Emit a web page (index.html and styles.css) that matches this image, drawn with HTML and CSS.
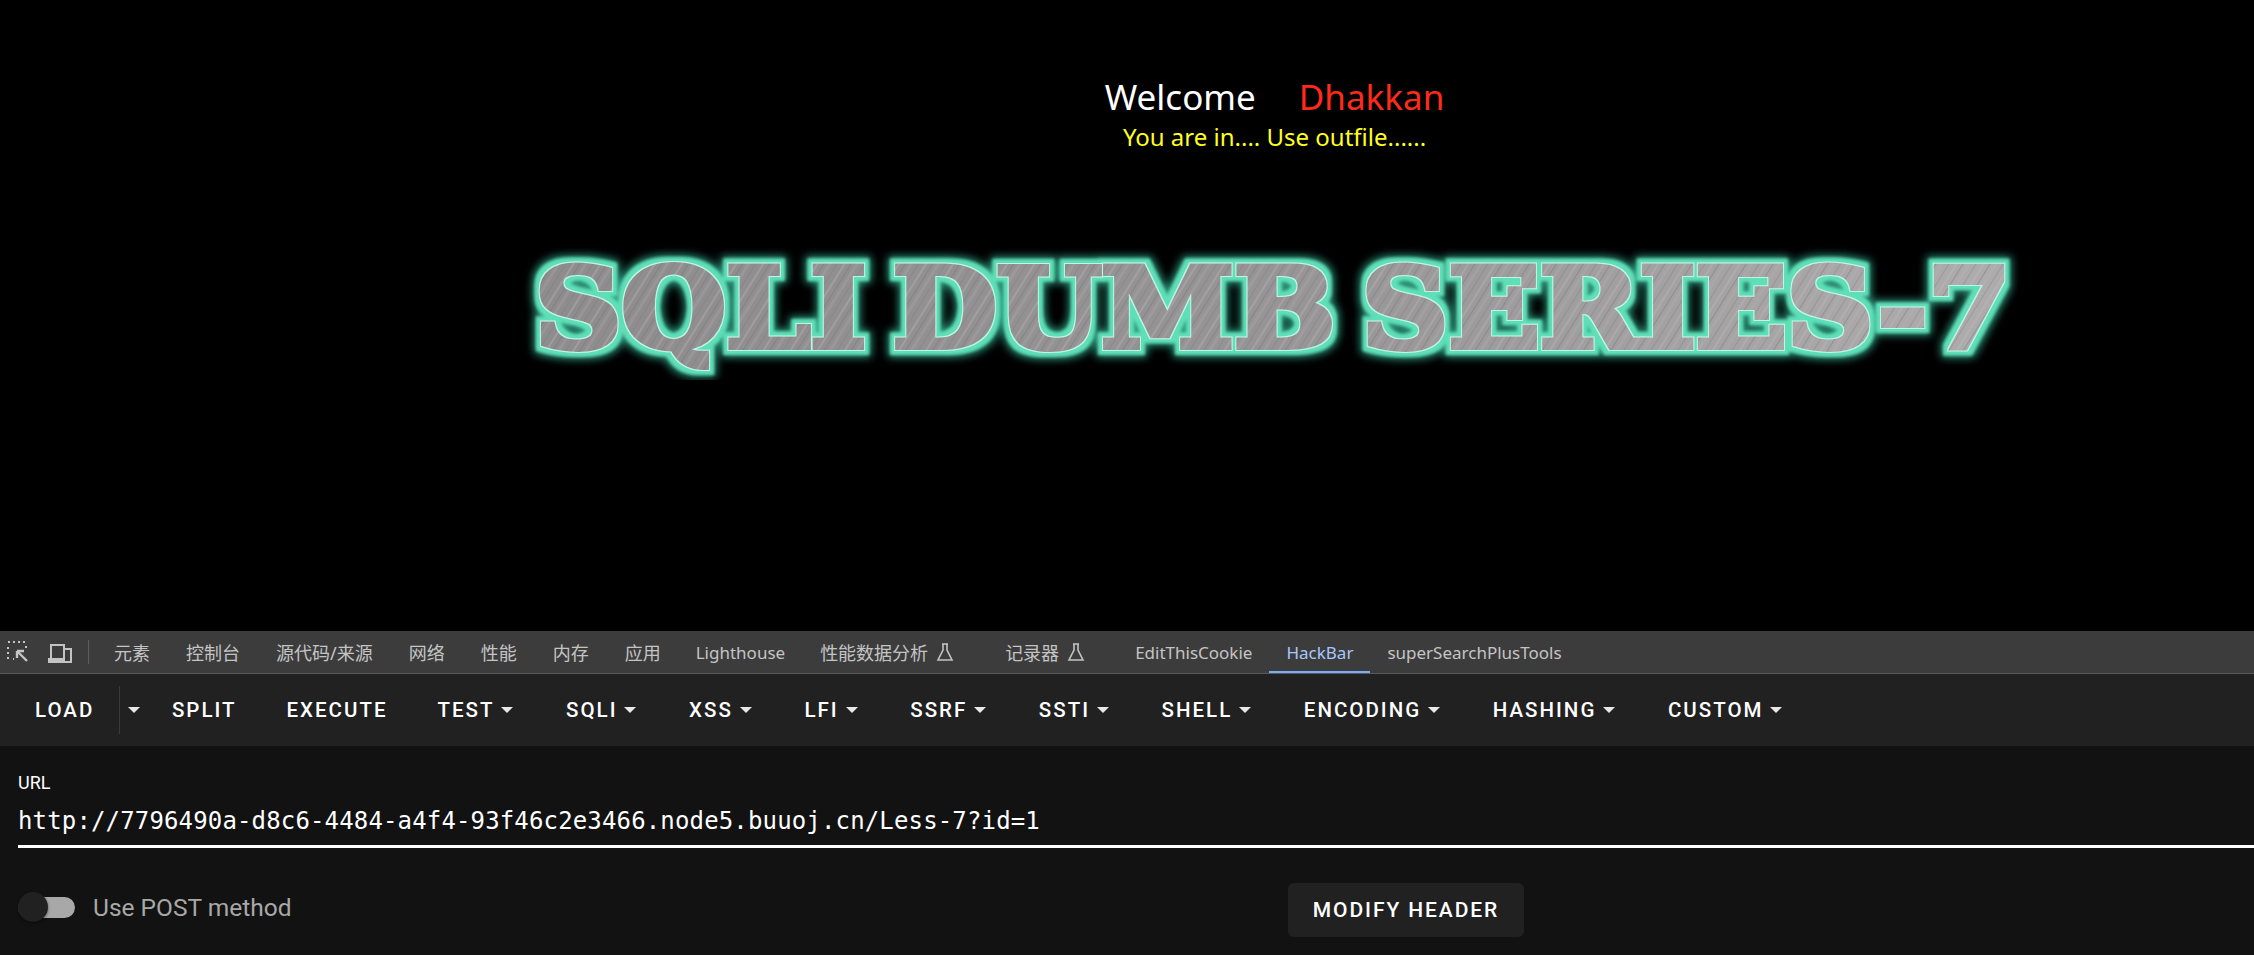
FILE: index.html
```html
<!DOCTYPE html>
<html lang="en">
  <head>
    <meta charset="UTF-8" />
    <title>SQLI DUMB SERIES-7</title>
    <link rel="stylesheet" href="styles.css">
  </head>
  <body>
    <div class="page">
      <div class="welcome"><span class="hello">Welcome</span><span class="name">Dhakkan</span></div>
      <div class="status">You are in.... Use outfile......</div>
      <svg class="banner" viewBox="0 0 1760 140" role="img">
        <defs>
          <linearGradient id="sheen" x1="0" y1="0" x2="1" y2="0">
            <stop offset="0.1" stop-color="#8f8c8e" />
            <stop offset="0.5" stop-color="#979496" />
            <stop offset="0.9" stop-color="#adabab" />
          </linearGradient>
          <pattern id="hatch" width="23" height="30" patternUnits="userSpaceOnUse" patternTransform="rotate(32)">
            <rect x="2" width="2" height="30" fill="#c4c1c1" opacity="0.3" />
            <rect x="8" width="1" height="30" fill="#6f6d70" opacity="0.4" />
            <rect x="12" width="3" height="30" fill="#bdbaba" opacity="0.2" />
            <rect x="19" width="1" height="30" fill="#77757a" opacity="0.35" />
          </pattern>
          <pattern id="brushed" width="1760" height="140" patternUnits="userSpaceOnUse">
            <rect width="1760" height="140" fill="url(#sheen)" />
            <rect width="1760" height="140" fill="url(#hatch)" />
          </pattern>
          <filter id="glow" x="-3%" y="-25%" width="106%" height="150%">
            <feMorphology in="SourceAlpha" operator="dilate" radius="7" result="fat" />
            <feGaussianBlur in="fat" stdDeviation="4" result="fatBlur" />
            <feFlood flood-color="#2f9c80" />
            <feComposite in2="fatBlur" operator="in" result="halo" />
            <feMorphology in="SourceAlpha" operator="dilate" radius="5" result="mid" />
            <feGaussianBlur in="mid" stdDeviation="1.500" result="midBlur" />
            <feFlood flood-color="#5fdfb8" />
            <feComposite in2="midBlur" operator="in" result="band" />
            <feMorphology in="SourceAlpha" operator="dilate" radius="1" result="thin" />
            <feFlood flood-color="#bff5e4" />
            <feComposite in2="thin" operator="in" result="edge" />
            <feMerge>
              <feMergeNode in="halo" />
              <feMergeNode in="band" />
              <feMergeNode in="edge" />
              <feMergeNode in="SourceGraphic" />
            </feMerge>
          </filter>
        </defs>
        <text class="banner-text" x="140" y="107" textLength="1476" lengthAdjust="spacingAndGlyphs" fill="url(#brushed)" stroke="url(#brushed)" filter="url(#glow)">SQLI DUMB SERIES-7</text>
      </svg>
    </div>

    <div class="tabbar">
      <svg class="tool-icon inspect" viewBox="0 0 22 22">
        <path d="M1 1h2M6 1h2M11 1h2M16 1h2M1 6v2M1 11v2M1 16v2M6 18h1M19 5v2" fill="none" stroke="#c4c4c4" stroke-width="2" />
        <path d="M11 11l9 9M10 10h7M10 10v7" fill="none" stroke="#c4c4c4" stroke-width="2.4" />
      </svg>
      <svg class="tool-icon device" viewBox="0 0 24 22">
        <path d="M3 18V4h13v3M0 18h14v3H0z" fill="none" stroke="#c4c4c4" stroke-width="2" />
        <path d="M0 19.500h14" stroke="#c4c4c4" stroke-width="3" />
        <rect x="16" y="8" width="7" height="13" fill="none" stroke="#c4c4c4" stroke-width="2" />
      </svg>
      <span class="tab-sep"></span>
      <span class="tab">元素</span>
      <span class="tab">控制台</span>
      <span class="tab">源代码/来源</span>
      <span class="tab">网络</span>
      <span class="tab">性能</span>
      <span class="tab">内存</span>
      <span class="tab">应用</span>
      <span class="tab latin">Lighthouse</span>
      <span class="tab tab-wide">性能数据分析
        <svg class="flask" viewBox="0 0 18 20"><path d="M6 2h6M7 2v6L2 18h14L11 8V2" fill="none" stroke="#c4c4c4" stroke-width="1.6" /></svg>
      </span>
      <span class="tab tab-wide">记录器
        <svg class="flask" viewBox="0 0 18 20"><path d="M6 2h6M7 2v6L2 18h14L11 8V2" fill="none" stroke="#c4c4c4" stroke-width="1.6" /></svg>
      </span>
      <span class="tab latin">EditThisCookie</span>
      <span class="tab latin active">HackBar</span>
      <span class="tab latin">superSearchPlusTools</span>
    </div>

    <div class="toolbar">
      <button class="tb-btn load">LOAD</button>
      <span class="tb-sep"></span>
      <button class="tb-btn arrow-only"><i class="caret"></i></button>
      <button class="tb-btn">SPLIT</button>
      <button class="tb-btn">EXECUTE</button>
      <button class="tb-btn">TEST<i class="caret"></i></button>
      <button class="tb-btn">SQLI<i class="caret"></i></button>
      <button class="tb-btn">XSS<i class="caret"></i></button>
      <button class="tb-btn">LFI<i class="caret"></i></button>
      <button class="tb-btn">SSRF<i class="caret"></i></button>
      <button class="tb-btn">SSTI<i class="caret"></i></button>
      <button class="tb-btn">SHELL<i class="caret"></i></button>
      <button class="tb-btn">ENCODING<i class="caret"></i></button>
      <button class="tb-btn">HASHING<i class="caret"></i></button>
      <button class="tb-btn">CUSTOM<i class="caret"></i></button>
    </div>

    <div class="panel">
      <label class="url-label">URL</label>
      <div class="url-value">http://7796490a-d8c6-4484-a4f4-93f46c2e3466.node5.buuoj.cn/Less-7?id=1</div>
      <div class="options">
        <div class="switch">
          <span class="track"><span class="knob"></span></span>
          <span class="switch-label">Use POST method</span>
        </div>
        <button class="modify">MODIFY HEADER</button>
      </div>
    </div>
  </body>
</html>
```

FILE: styles.css
```css
* {
  box-sizing: border-box;
}
body {
  margin: 0;
  height: 955px;
  overflow: hidden;
  display: flex;
  flex-direction: column;
  background: #121212;
  font-family: Roboto, Arial, sans-serif;
}
.page {
  height: 631px;
  background: #000;
  padding: 72px 0 0 295px;
  display: flex;
  flex-direction: column;
  align-items: center;
  font-family: "Noto Sans", "Open Sans", sans-serif;
}
.welcome {
  font-size: 35px;
  line-height: 50px;
  display: flex;
  gap: 43px;
}
.hello {
  color: #fff;
}
.name {
  color: #ff2a1a;
}
.status {
  color: #ffff1e;
  font-size: 24px;
  line-height: 30px;
}
.banner {
  width: 1760px;
  height: 140px;
  margin-top: 88px;
  flex: none;
}
.banner-text {
  font-family: "DejaVu Serif", serif;
  font-weight: bold;
  font-size: 110px;
  stroke-width: 6px;
  word-spacing: -14px;
}

.tabbar {
  height: 43px;
  background: #3c3c3c;
  border-bottom: 1px solid #5a5a5a;
  display: flex;
  align-items: stretch;
  padding-left: 7px;
  color: #c4c4c4;
  font-family: "Noto Sans", "Noto Sans CJK SC", sans-serif;
  font-size: 18px;
}
.tool-icon {
  height: 22px;
  margin-top: 10px;
}
.inspect {
  width: 22px;
  margin-right: 19px;
}
.device {
  width: 24px;
  margin-right: 16px;
}
.tab-sep {
  width: 1px;
  height: 24px;
  margin: 9px 7px 0 0;
  background: #5f5f5f;
}
.tab {
  display: flex;
  align-items: center;
  gap: 8px;
  padding: 0 18px;
  white-space: nowrap;
}
.tab.latin {
  font-size: 17px;
  padding: 0 17px;
}
.tab-wide {
  padding-right: 33px;
}
.tab.active {
  color: #a8c7fa;
  box-shadow: inset 0 -2px 0 #7cacf8;
}
.flask {
  width: 18px;
  height: 20px;
}

.toolbar {
  height: 72px;
  background: #212121;
  display: flex;
  align-items: center;
  padding-left: 10px;
}
.tb-btn {
  height: 54px;
  padding: 0 25px;
  border: none;
  background: none;
  color: #fff;
  font-family: Roboto, Arial, sans-serif;
  font-weight: 500;
  font-size: 20.5px;
  letter-spacing: 2px;
  display: flex;
  align-items: center;
  gap: 7px;
  white-space: nowrap;
}
.tb-btn.arrow-only {
  padding: 0 4px 0 8px;
}
.tb-sep {
  width: 1px;
  height: 48px;
  background: #3a3a3a;
}
.caret {
  width: 0;
  height: 0;
  margin-right: 2.6px;
  border-left: 6px solid transparent;
  border-right: 6px solid transparent;
  border-top: 6px solid #e8e8e8;
}

.panel {
  flex: 1;
  background: #121212;
  padding: 26px 0 0 18px;
}
.url-label {
  display: block;
  color: #fff;
  font-size: 18px;
  line-height: 22px;
}
.url-value {
  margin-top: 10px;
  height: 44px;
  padding-top: 1px;
  border-bottom: 3px solid #fff;
  color: #fff;
  font-family: "DejaVu Sans Mono", "Liberation Mono", monospace;
  font-size: 24px;
  line-height: 32px;
  letter-spacing: 0.15px;
  white-space: nowrap;
}
.options {
  display: grid;
  grid-template-columns: 1270px auto;
  align-items: center;
  margin-top: 35px;
}
.switch {
  display: flex;
  align-items: center;
  gap: 18px;
  padding-bottom: 5px;
}
.track {
  display: block;
  width: 57px;
  height: 21px;
  border-radius: 11px;
  background: #a8a8a8;
  position: relative;
}
.knob {
  position: absolute;
  left: 0;
  top: -5px;
  width: 30px;
  height: 30px;
  border-radius: 50%;
  background: #212121;
  box-shadow: 0 1px 3px rgba(0, 0, 0, 0.5);
}
.switch-label {
  color: #a8a8a8;
  font-size: 24.5px;
}
.modify {
  width: 236px;
  height: 54px;
  border: none;
  border-radius: 6px;
  background: #212121;
  color: #fff;
  font-family: Roboto, Arial, sans-serif;
  font-weight: 500;
  font-size: 21px;
  letter-spacing: 1.9px;
}
```
